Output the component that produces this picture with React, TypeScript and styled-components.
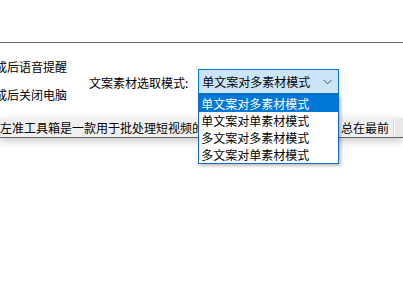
import React from "react";
import styled, { createGlobalStyle } from "styled-components";

const Global = createGlobalStyle`
  html, body {
    margin: 0;
    padding: 0;
    background: #ffffff;
    overflow: hidden;
  }
  body {
    font-family: "Noto Sans CJK SC", "Microsoft YaHei", sans-serif;
    font-size: 12px;
    color: #000;
  }
`;

const Page = styled.div`
  width: 403px;
  height: 288px;
  position: relative;
  overflow: hidden;
  background: #fff;
`;

const TopBlank = styled.div`
  height: 42px;
  border-bottom: 1px solid #6a6a6a;
`;

const Options = styled.div`
  display: flex;
  align-items: flex-start;
  height: 75px;
`;

const CheckColumn = styled.div`
  display: flex;
  flex-direction: column;
  gap: 12px;
  margin-left: -5px;
  padding-top: 16px;
  width: 84px;
  flex-shrink: 0;
`;

const CheckLabel = styled.div`
  line-height: 16px;
  white-space: nowrap;
`;

const ModeGroup = styled.div`
  display: flex;
  align-items: center;
  gap: 10px;
  margin-left: 10px;
  margin-top: 26px;
`;

const ModeLabel = styled.div`
  line-height: 16px;
  padding-top: 3px;
  white-space: nowrap;
`;

const SelectWrap = styled.div`
  position: relative;
  width: 141px;
`;

const SelectBox = styled.div`
  box-sizing: border-box;
  height: 25px;
  border: 1px solid #0078d7;
  background: #cce4f7;
  display: flex;
  align-items: center;
  justify-content: space-between;
  padding: 0 6px 0 3px;
  line-height: 16px;
`;

const Chevron = styled.svg`
  width: 9px;
  height: 6px;
  margin-top: 1px;
`;

const ListBox = styled.div`
  position: absolute;
  top: 100%;
  left: 0;
  width: 141px;
  box-sizing: border-box;
  border: 1px solid #1469c4;
  background: #fff;
  z-index: 10;
  box-shadow: 2px 2px 3px rgba(0, 0, 0, 0.25);
`;

const ListItem = styled.div<{ $active?: boolean }>`
  height: 17px;
  line-height: 17px;
  padding-left: 2px;
  white-space: nowrap;
  background: ${(p) => (p.$active ? "#0078d7" : "#fff")};
  color: ${(p) => (p.$active ? "#fff" : "#000")};
`;

const StatusBar = styled.div`
  height: 19px;
  background: #f0f0f0;
  border-bottom: 1px solid #646464;
  box-shadow: 0 3px 8px rgba(0, 0, 0, 0.22);
  display: flex;
  align-items: stretch;
`;

const StatusMain = styled.div`
  width: 341px;
  flex-shrink: 0;
  overflow: hidden;
  white-space: nowrap;
  line-height: 19px;
`;

const StatusTop = styled.div`
  width: 52px;
  flex-shrink: 0;
  line-height: 19px;
  white-space: nowrap;
  border-right: 1px solid #d9d9d9;
`;

const StatusGrip = styled.div`
  flex: 1;
  background: #e9e9e9;
  border-left: 1px solid #fdfdfd;
`;

const options = [
  "单文案对多素材模式",
  "单文案对单素材模式",
  "多文案对多素材模式",
  "多文案对单素材模式",
];

export default function App() {
  return (
    <Page>
      <Global />
      <TopBlank />
      <Options>
        <CheckColumn>
          <CheckLabel>成后语音提醒</CheckLabel>
          <CheckLabel>成后关闭电脑</CheckLabel>
        </CheckColumn>
        <ModeGroup>
          <ModeLabel>文案素材选取模式:</ModeLabel>
          <SelectWrap>
            <SelectBox>
              <span>{options[0]}</span>
              <Chevron viewBox="0 0 9 6">
                <polyline
                  points="0.5,0.8 4.5,4.8 8.5,0.8"
                  fill="none"
                  stroke="#555"
                  strokeWidth="1"
                />
              </Chevron>
            </SelectBox>
            <ListBox>
              {options.map((o, i) => (
                <ListItem key={o} $active={i === 0}>
                  {o}
                </ListItem>
              ))}
            </ListBox>
          </SelectWrap>
        </ModeGroup>
      </Options>
      <StatusBar>
        <StatusMain>左准工具箱是一款用于批处理短视频的工具软件</StatusMain>
        <StatusTop>总在最前</StatusTop>
        <StatusGrip />
      </StatusBar>
    </Page>
  );
}
